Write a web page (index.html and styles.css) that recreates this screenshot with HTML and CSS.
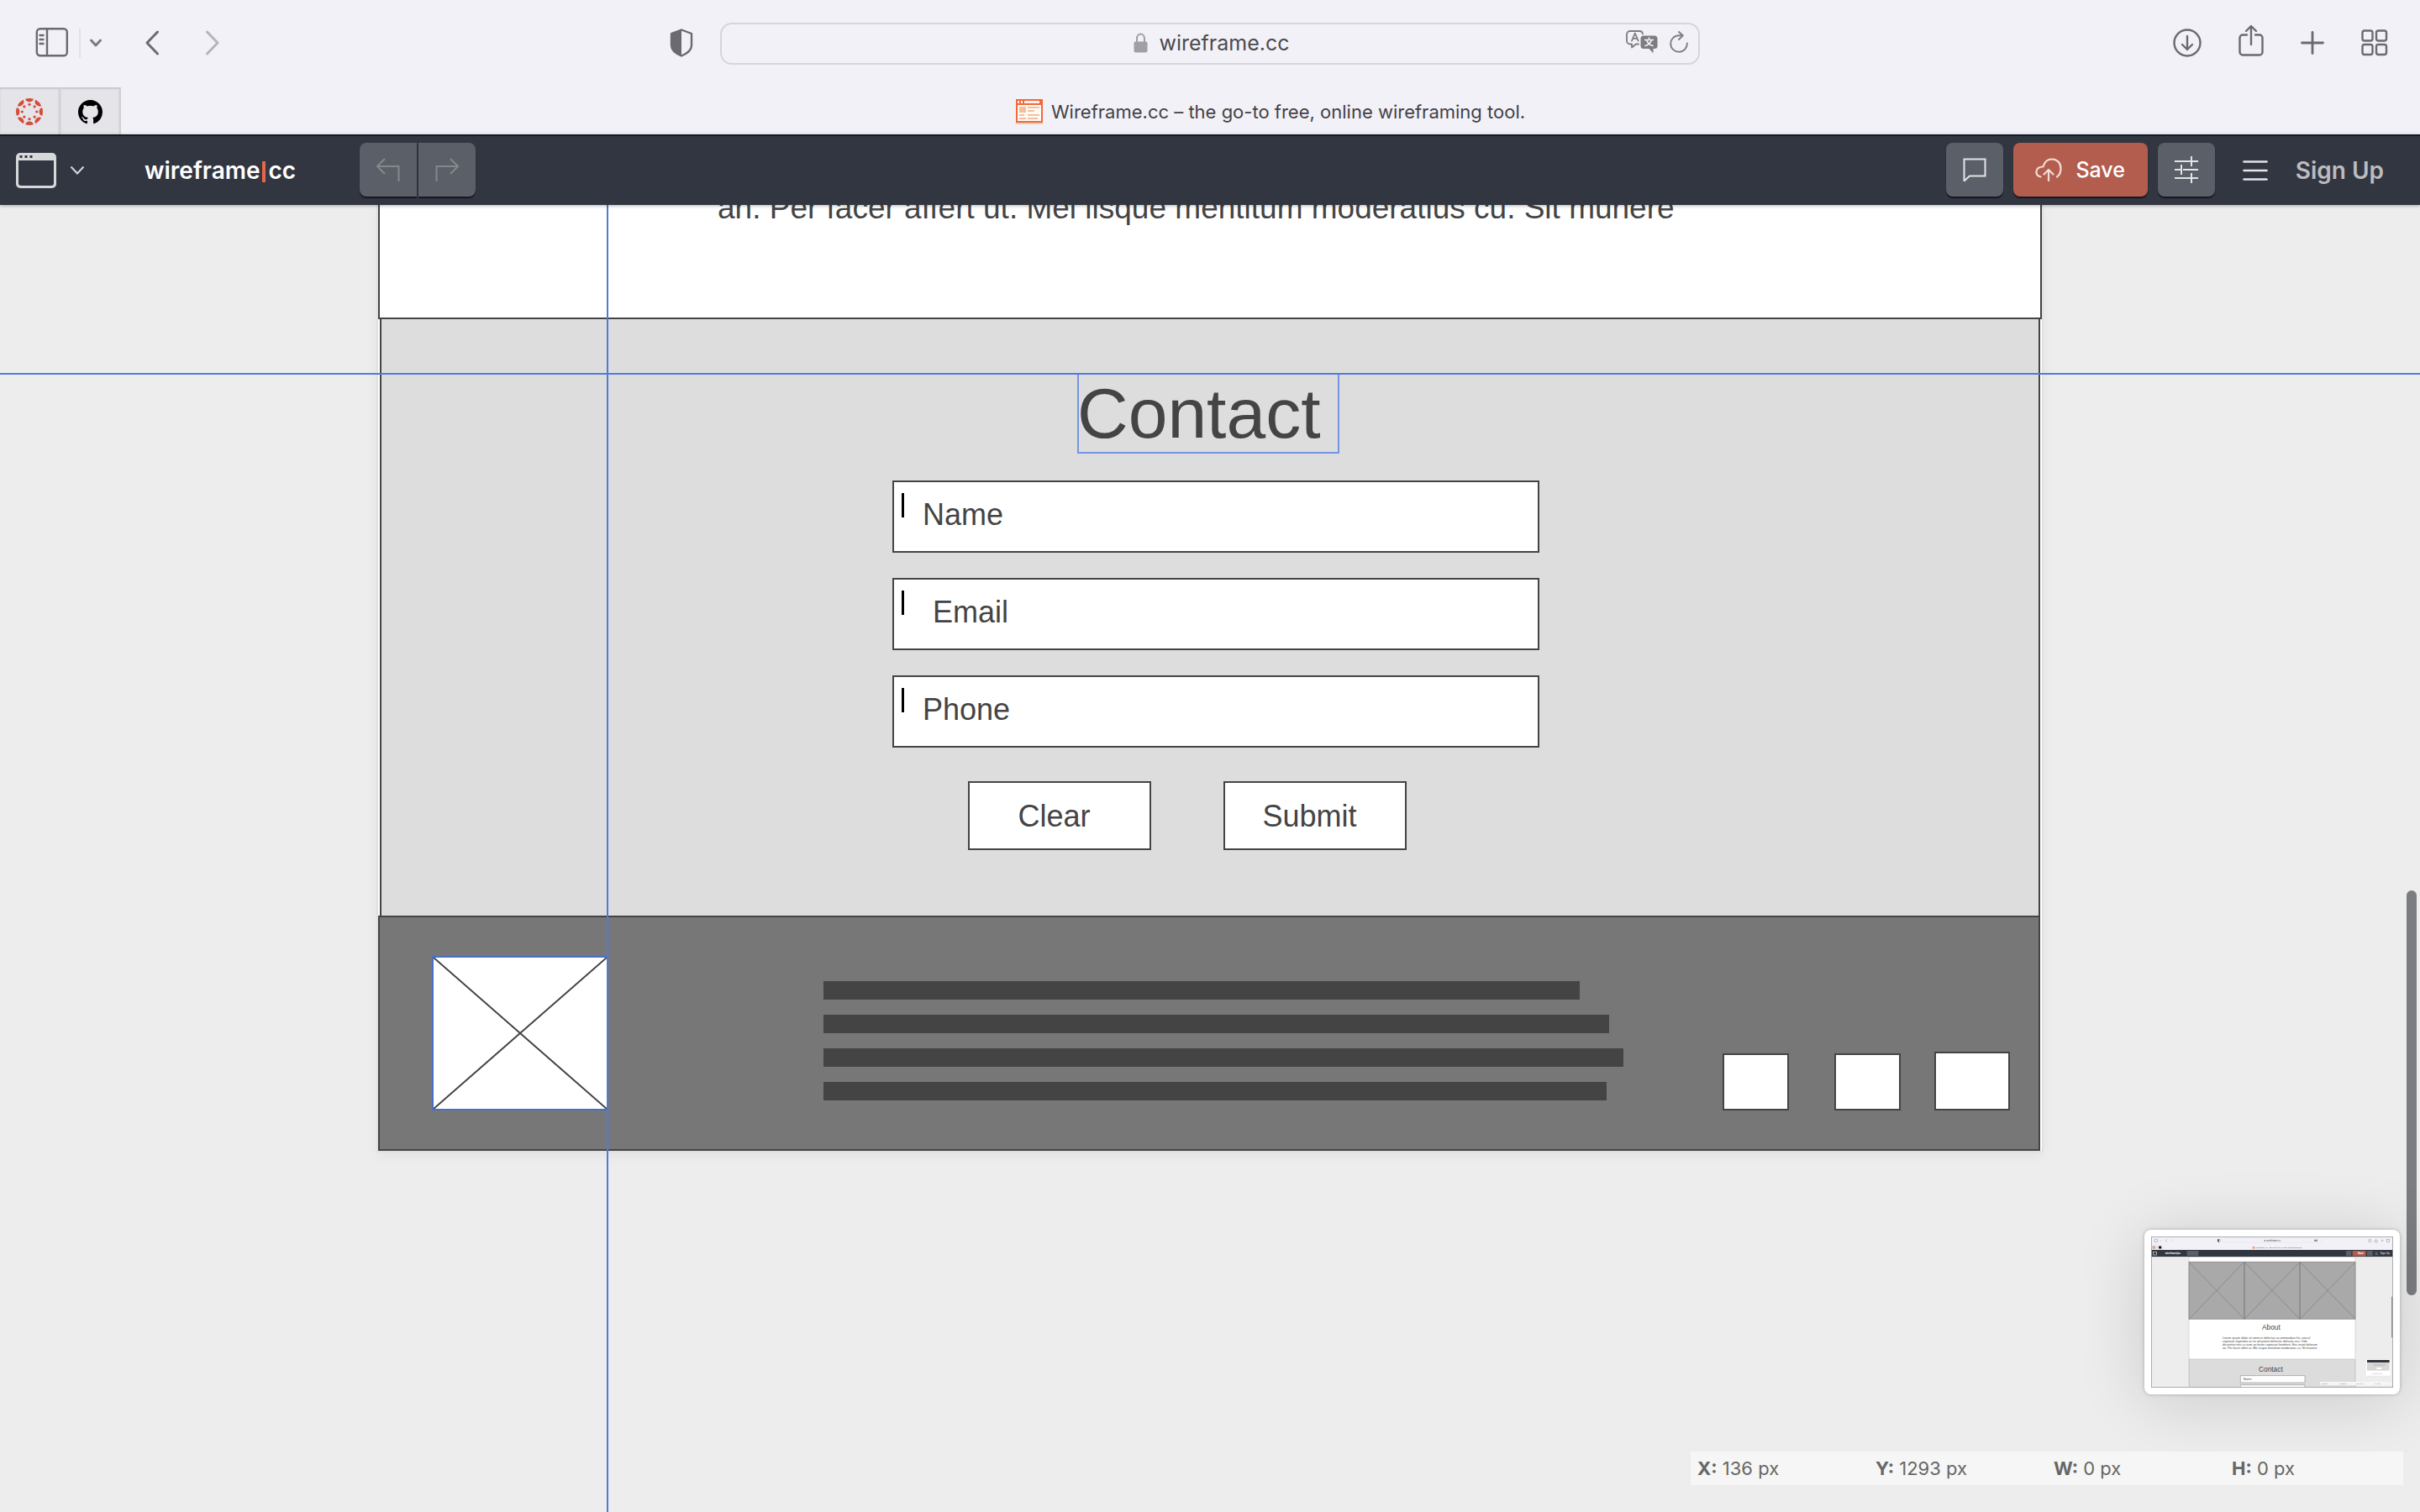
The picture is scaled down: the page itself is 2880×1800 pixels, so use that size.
FILE: index.html
```html
<!DOCTYPE html>
<html lang="en">
<head>
<meta charset="utf-8">
<title>Wireframe.cc – the go-to free, online wireframing tool.</title>
<link rel="stylesheet" href="styles.css">
</head>
<body>
<header class="browser">
  <div class="browser-bar">
    <div class="browser-left">
      <button class="icon-btn sidebar-btn" aria-label="Show sidebar">
        <svg width="40" height="36" viewBox="0 0 40 36" fill="none" stroke="#6b6a70" stroke-width="2.4" stroke-linecap="round"><rect x="1.8" y="1.2" width="36" height="32" rx="4"/><path d="M14 1v32M5.500 9h4M5.500 14h4M5.500 19h4" /></svg>
      </button>
      <span class="divider"></span>
      <button class="icon-btn menu-btn" aria-label="Sidebar menu">
        <svg width="16" height="12" viewBox="0 0 16 12" fill="none" stroke="#7c7b84" stroke-width="3" stroke-linecap="round" stroke-linejoin="round"><path d="M2.500 3l5.500 6 5.500-6"/></svg>
      </button>
      <button class="icon-btn back-btn" aria-label="Back">
        <svg width="18" height="32" viewBox="0 0 18 32" fill="none" stroke="#6b6a70" stroke-width="3" stroke-linecap="round" stroke-linejoin="round"><path d="M15.500 3L3 16l12.500 13"/></svg>
      </button>
      <button class="icon-btn forward-btn" aria-label="Forward">
        <svg width="18" height="32" viewBox="0 0 18 32" fill="none" stroke="#b5b4ba" stroke-width="3" stroke-linecap="round" stroke-linejoin="round"><path d="M2.500 3L15 16 2.500 29"/></svg>
      </button>
      <button class="icon-btn shield-btn" aria-label="Privacy report">
        <svg width="28" height="34" viewBox="0 0 28 34"><path d="M14 1.500L26 6v14c0 6-6 10-12 12.500C8 30 2 26 2 20V6z" fill="none" stroke="#6b6a70" stroke-width="2.400" stroke-linejoin="round"/><path d="M14 1.500V32.500C8 30 2 26 2 20V6z" fill="#6b6a70"/></svg>
      </button>
    </div>
    <div class="address">
      <span class="address-text">
        <svg width="17" height="24" viewBox="0 0 17 24"><path d="M4 12V7a4.500 5.500 0 0 1 9 0v5" fill="none" stroke="#a09fa5" stroke-width="2"/><rect x="0.500" y="10.500" width="16" height="13" rx="2" fill="#a09fa5"/></svg>
        <span>wireframe.cc</span>
      </span>
      <span class="address-tools">
        <button class="icon-btn" aria-label="Translate">
          <svg width="38" height="28" viewBox="0 0 38 28" fill="none" stroke="#7d7d80" stroke-width="1.800" stroke-linecap="round" stroke-linejoin="round"><path d="M15 16.500h-3l-5 4v-4H5a4 4 0 0 1-4-4V5a4 4 0 0 1 4-4h11a4 4 0 0 1 4 3.500"/><path d="M7 12.500l3.800-9 3.800 9M8.300 9.800h5"/><path d="M21 6.500h13a3.500 3.500 0 0 1 3.500 3.500v8.500a3.500 3.500 0 0 1-3.500 3.500h-1.500v5.500l-5-5.500H21a3.500 3.500 0 0 1-3.500-3.500V10a3.500 3.500 0 0 1 3.500-3.500z" fill="#7d7d80" stroke="none"/><path d="M22.500 11.500h10M27.500 9v2.500M30.500 11.500c-1 3.500-4 6-7.500 7M24.500 11.500c1 3.500 4 6 7.500 7" stroke="#f2f1f7" stroke-width="1.600"/></svg>
        </button>
        <button class="icon-btn" aria-label="Reload">
          <svg width="22" height="26" viewBox="0 0 22 26" fill="none" stroke="#828185" stroke-width="2" stroke-linecap="round" stroke-linejoin="round"><path d="M20.800 14.500a9.800 9.800 0 1 1-9.800-9.300h4.500M11 1l4.800 4.300L11 10"/></svg>
        </button>
      </span>
    </div>
    <div class="browser-right">
      <button class="icon-btn" aria-label="Downloads">
        <svg width="34" height="34" viewBox="0 0 34 34" fill="none" stroke="#6b6a70" stroke-width="2.400" stroke-linecap="round" stroke-linejoin="round"><circle cx="17" cy="17" r="15.500"/><path d="M17 9v16M11 19l6 6 6-6"/></svg>
      </button>
      <button class="icon-btn share-btn" aria-label="Share">
        <svg width="30" height="38" viewBox="0 0 30 38" fill="none" stroke="#6b6a70" stroke-width="2.400" stroke-linecap="round" stroke-linejoin="round"><path d="M10 12.500H5a3.500 3.500 0 0 0-3.500 3.500v17A3.500 3.500 0 0 0 5 36.500h20a3.500 3.500 0 0 0 3.500-3.500V16a3.500 3.500 0 0 0-3.500-3.500h-5M15 24V2.500M9 8l6-6 6 6"/></svg>
      </button>
      <button class="icon-btn new-tab-btn" aria-label="New tab">
        <svg width="28" height="28" viewBox="0 0 28 28" fill="none" stroke="#6b6a70" stroke-width="2.800" stroke-linecap="round"><path d="M14 1.500v25M1.500 14h25"/></svg>
      </button>
      <button class="icon-btn" aria-label="Tab overview">
        <svg width="32" height="32" viewBox="0 0 32 32" fill="none" stroke="#6b6a70" stroke-width="2.400"><rect x="1.500" y="1.500" width="12" height="12" rx="2.500"/><rect x="18" y="1.500" width="12" height="12" rx="2.500"/><rect x="1.500" y="18" width="12" height="12" rx="2.500"/><rect x="18" y="18" width="12" height="12" rx="2.500"/></svg>
      </button>
    </div>
  </div>
  <div class="tabs">
    <button class="pinned-tab" aria-label="Canvas">
      <svg width="32" height="32" viewBox="-16 -16 32 32" fill="#d64b38"><defs><g id="petal"><path d="M-4.800-15.200A16 16 0 0 1 4.800-15.200A4.800 3.600 0 0 1-4.800-15.200z"/><circle cx="0" cy="-8.700" r="1.600"/></g></defs><use href="#petal"/><use href="#petal" transform="rotate(45)"/><use href="#petal" transform="rotate(90)"/><use href="#petal" transform="rotate(135)"/><use href="#petal" transform="rotate(180)"/><use href="#petal" transform="rotate(225)"/><use href="#petal" transform="rotate(270)"/><use href="#petal" transform="rotate(315)"/></svg>
    </button>
    <button class="pinned-tab" aria-label="GitHub">
      <svg width="29" height="29" viewBox="0 0 16 16" fill="#000"><path d="M8 0C3.580 0 0 3.580 0 8c0 3.540 2.290 6.530 5.470 7.590.4.070.55-.17.55-.38 0-.19-.01-.82-.01-1.490-2.010.37-2.530-.49-2.690-.94-.09-.23-.48-.94-.82-1.130-.28-.15-.68-.52-.01-.53.63-.01 1.080.58 1.230.82.72 1.210 1.870.87 2.330.66.07-.52.28-.87.51-1.070-1.780-.2-3.640-.89-3.640-3.950 0-.87.31-1.590.82-2.150-.08-.2-.36-1.020.08-2.120 0 0 .67-.21 2.200.82.64-.18 1.320-.27 2-.27s1.360.09 2 .27c1.530-1.040 2.200-.82 2.200-.82.44 1.100.16 1.920.08 2.120.51.56.82 1.270.82 2.150 0 3.070-1.870 3.750-3.650 3.950.29.25.54.73.54 1.480 0 1.070-.01 1.930-.01 2.200 0 .21.15.46.55.38A8.010 8.010 0 0 0 16 8c0-4.420-3.580-8-8-8z"/></svg>
    </button>
    <div class="active-tab">
      <svg width="32" height="30" viewBox="0 0 32 30"><rect y="1" width="32" height="29" fill="#e9c9bd"/><rect width="32" height="28" fill="#f06a3b"/><path d="M2 7h28v19H2z" fill="#fffaf6"/><path d="M2 2h2v3H2zM6 2h2v3H6zM10 2h18v3H10z" fill="#fff1ea"/><path d="M4 9h8v7H4zM14 9h14v2H14zM14 13h8v2h-8zM4 18h6v2H4zM14 18h14v2H14zM4 22h8v2H4zM14 22h12v2H14z" fill="#f6bf9c"/></svg>
      <span>Wireframe.cc – the go-to free, online wireframing tool.</span>
    </div>
  </div>
</header>

<nav class="toolbar">
  <button class="icon-btn window-btn" aria-label="Page type">
    <svg width="48" height="42" viewBox="0 0 48 42"><path fill-rule="evenodd" d="M5 0h38a5 5 0 0 1 5 5v32a5 5 0 0 1-5 5H5a5 5 0 0 1-5-5V5a5 5 0 0 1 5-5zM3 9v27a3 3 0 0 0 3 3h36a3 3 0 0 0 3-3V9z" fill="#d6d8da"/><path d="M4.500 3h3v3h-3zM10.500 3h3v3h-3zM16.500 3h3v3h-3z" fill="#323641"/></svg>
    <svg width="18" height="12" viewBox="0 0 18 12" fill="none" stroke="#d6d8da" stroke-width="2"><path d="M1.500 1.500L9 9.500l7.500-8"/></svg>
  </button>
  <a class="brand" href="#">wireframe<span class="brand-bar"></span>cc</a>
  <div class="history">
    <button class="tool-btn" aria-label="Undo">
      <svg width="30" height="28" viewBox="0 0 30 28" fill="none" stroke="#86878a" stroke-width="2"><path d="M27.500 28V10H2M11 1L2 10l9 9"/></svg>
    </button>
    <button class="tool-btn" aria-label="Redo">
      <svg width="30" height="28" viewBox="0 0 30 28" fill="none" stroke="#86878a" stroke-width="2"><path d="M2.500 28V10H28M19 1l9 9-9 9"/></svg>
    </button>
  </div>
  <div class="actions">
    <button class="tool-btn" aria-label="Comments">
      <svg width="28" height="28" viewBox="0 0 28 28" fill="none" stroke="#e3e4e6" stroke-width="2"><path d="M1.500 1.500h25v20H8l-6.500 6z"/></svg>
    </button>
    <button class="tool-btn save-btn">
      <svg width="32" height="28" viewBox="0 0 32 28" fill="none" stroke="#f6dcd6" stroke-width="2.200" stroke-linecap="round" stroke-linejoin="round"><path d="M6.500 22.500C3 21.500 1 19 1.500 16c.5-3.500 3.500-5.500 8-5.500C11 5 14.500 1.500 20 1.500c6 0 10.500 4.500 10.500 11 0 4.500-1.500 8-4.500 10M16 27V14M10.500 19.500L16 14l5.500 5.500"/></svg>
      <span>Save</span>
    </button>
    <button class="tool-btn" aria-label="Settings">
      <svg width="28" height="32" viewBox="0 0 28 32" fill="none" stroke="#e3e4e6" stroke-width="2"><path d="M0 6h19M21 6h7M20 0v12M0 16h8M10 16h18M8 10v12M0 26h19M21 26h7M20 20v12"/></svg>
    </button>
    <button class="icon-btn burger-btn" aria-label="Menu">
      <svg width="30" height="26" viewBox="0 0 30 26" stroke="#e3e4e6" stroke-width="2.600" stroke-linecap="round"><path d="M1.500 2.500h27M1.500 13h27M1.500 23.500h27"/></svg>
    </button>
    <a class="sign-up" href="#">Sign Up</a>
  </div>
</nav>

<main class="canvas">
  <article class="artboard">
    <section class="about">
      <p class="about-text">an. Per facer affert ut. Mei iisque mentitum moderatius cu. Sit munere</p>
    </section>
    <section class="contact">
      <h2 class="contact-title">Contact</h2>
      <form class="contact-form">
        <label class="field"><span class="caret"></span><span class="field-name">Name</span><input type="text" name="name"></label>
        <label class="field field-indented"><span class="caret"></span><span class="field-name">Email</span><input type="email" name="email"></label>
        <label class="field"><span class="caret"></span><span class="field-name">Phone</span><input type="tel" name="phone"></label>
        <div class="form-buttons">
          <button class="form-btn" type="reset">Clear</button>
          <button class="form-btn" type="button">Submit</button>
        </div>
      </form>
    </section>
    <footer class="page-footer">
      <svg class="picture" viewBox="0 0 206 180" preserveAspectRatio="none"><path d="M0 0L206 180M206 0L0 180" stroke="#444" stroke-width="2"/></svg>
      <div class="copy-lines">
        <span class="copy-line" style="width:900px"></span>
        <span class="copy-line" style="width:935px"></span>
        <span class="copy-line" style="width:952px"></span>
        <span class="copy-line" style="width:932px"></span>
      </div>
      <div class="socials">
        <span class="social"></span>
        <span class="social"></span>
        <span class="social social-wide"></span>
      </div>
    </footer>
  </article>

  <span class="guide guide-x"></span>
  <span class="guide guide-y"></span>
  <span class="scroll-thumb"></span>

  <figure class="preview">
    <svg viewBox="0 0 864 540" font-family="Liberation Sans, sans-serif">
      <rect width="864" height="540" fill="#f2f1f7"/>
      <g fill="none" stroke="#8a8990" stroke-width="1.500"><rect x="12" y="10" width="11" height="10" rx="2"/><path d="M32 14l2 2 2-2M56 10l-4 5 4 5"/><path d="M74 10l4 5-4 5" stroke="#c4c3c8"/><circle cx="781" cy="15" r="5"/><path d="M799 13v7h8v-7M803 16V8M822 15h7M825 11v7"/><rect x="842" y="10" width="9" height="9"/></g>
      <path d="M242 10h-5v7l5 4z" fill="#333"/><path d="M242 10h5v7l-5 4" fill="none" stroke="#555"/>
      <rect x="256" y="7" width="352" height="15" rx="4" fill="none" stroke="#dedde2"/>
      <text x="412" y="18" font-size="9" fill="#444">wireframe.cc</text><path d="M404 12h4v6h-4zM582 11h12v6h-12z" fill="#888"/>
      <rect y="32" width="43" height="16" fill="#e5e4e9"/><circle cx="10" cy="39" r="4" fill="none" stroke="#d64b38" stroke-width="2"/><circle cx="32" cy="39" r="5" fill="#111"/>
      <rect x="362" y="36" width="9" height="8" fill="#f6a17e"/><text x="374" y="42" font-size="7" fill="#444">Wireframe.cc – the go-to free, online wireframing tool.</text>
      <rect y="48" width="864" height="25" fill="#323641"/>
      <rect x="7" y="55" width="13" height="11" fill="none" stroke="#ddd" stroke-width="2"/>
      <text x="50" y="64" font-size="9" font-weight="700" fill="#fff">wireframe|cc</text>
      <path d="M128 51h41v18h-41zM696 51h19v18h-19zM771 51h20v18h-20z" fill="#5b5f68"/><rect x="719" y="51" width="48" height="19" fill="#b35d4f"/>
      <text x="738" y="64" font-size="9" font-weight="700" fill="#fff">Save</text><text x="818" y="64" font-size="9" font-weight="700" fill="#c4c4c4">Sign Up</text><path d="M800 57h9M800 61h9M800 65h9" stroke="#ddd"/>
      <rect y="73" width="864" height="467" fill="#ededed"/>
      <rect x="135" y="73" width="594" height="467" fill="#fff" stroke="#999"/>
      <path d="M135 91h594v204H135z" fill="#a9a9a9"/>
      <path d="M135 91h198v204H135zM333 91h198v204H333zM531 91h198v204H531zM135 91l198 204M333 91L135 295M333 91l198 204M531 91L333 295M531 91l198 204M729 91L531 295" fill="none" stroke="#7c7c7c" stroke-width="2"/>
      <text x="396" y="333" font-size="25" fill="#444">About</text>
      <g font-size="11" fill="#444"><text x="255" y="365">Lorem ipsum dolor sit amet et delectus accommodare his consul</text><text x="255" y="378">copiosae legendos at vis ad putent delectus delicata usu. Vidit</text><text x="255" y="390">dissentiet eos cu eum an brute copiosae hendrerit. Eos erant dolorum</text><text x="255" y="403">an. Per facer affert ut. Mei iisque mentitum moderatius cu. Sit munere</text></g>
      <rect x="136" y="438" width="592" height="102" fill="#dcdcdc" stroke="#999"/>
      <text x="384" y="482" font-size="25" fill="#444">Contact</text>
      <path d="M319 497h230v25H319zM319 530h230v12H319z" fill="#fff" stroke="#777" stroke-width="1.500"/><text x="329" y="512" font-size="11" fill="#444">Name</text>
      <rect x="766" y="438" width="90" height="60" rx="3" fill="#fff" stroke="#ddd"/><rect x="771" y="441" width="80" height="9" fill="#33363e"/><rect x="771" y="450" width="80" height="29" fill="#d8d8d8"/><rect x="805" y="468" width="18" height="6" rx="2" fill="#fff"/><path d="M792 457h45M796 461h38M787 490h40" stroke="#999"/>
      <rect x="603" y="519" width="255" height="12" fill="#f6f6f6"/><g font-size="7" fill="#666"><text x="605" y="527">X: 33 px</text><text x="669" y="527">Y: 850 px</text><text x="733" y="527">W: 0 px</text><text x="797" y="527">H: 0 px</text></g>
      <rect x="858" y="215" width="4" height="146" fill="#888b90"/>
      <rect x="1" y="1" width="862" height="538" fill="none" stroke="#a0a0a4" stroke-width="3"/>
    </svg>
  </figure>

  <div class="status">
    <span><b>X:</b> 136 px</span>
    <span><b>Y:</b> 1293 px</span>
    <span><b>W:</b> 0 px</span>
    <span><b>H:</b> 0 px</span>
  </div>
</main>
</body>
</html>
```
FILE: styles.css
```css
* { box-sizing: border-box; }

body {
  margin: 0;
  min-height: 100vh;
  display: flex;
  flex-direction: column;
  background: #ededed;
  font-family: Inter, "Liberation Sans", sans-serif;
}

button { font: inherit; cursor: pointer; }
svg { display: block; }
a { text-decoration: none; }

.icon-btn {
  display: flex;
  align-items: center;
  padding: 0;
  border: 0;
  background: none;
}

/* Browser chrome */
.browser { background: #f2f1f7; }

.browser-bar {
  display: grid;
  grid-template-columns: 1fr minmax(0, 1166px) 1fr;
  align-items: center;
  height: 104px;
}

.browser-left,
.browser-right { display: flex; align-items: center; padding-bottom: 2px; }

.browser-left { padding-left: 42px; padding-right: 32px; }
.divider { width: 2px; height: 36px; margin: 0 10px 0 12px; background: #e2e1e7; }
.menu-btn { margin-right: 50px; }
.back-btn { margin-right: 54px; }
.shield-btn { margin-left: auto; }

.browser-right { justify-content: flex-end; padding-right: 38px; gap: 44px; }
.share-btn { margin-bottom: 6px; }

.address {
  display: grid;
  grid-template-columns: 1fr auto 1fr;
  align-items: center;
  height: 50px;
  border: 2px solid #d6d5da;
  border-radius: 14px;
}

.address-text {
  grid-column: 2;
  display: flex;
  align-items: center;
  gap: 13px;
  padding: 0 0 2px 4px;
  font-size: 25px;
  line-height: 32px;
  color: #4c4b50;
}

.address-tools { display: flex; justify-content: flex-end; gap: 14px; padding: 0 12px 4px 0; }

.tabs { display: flex; height: 56px; }

.pinned-tab {
  display: flex;
  align-items: center;
  justify-content: center;
  width: 72px;
  padding: 2px 0 0;
  border: 0;
  border-right: 2px solid #d1d0d5;
  background: #e5e4e9;
  box-shadow: inset 0 2px 2px #c6c5ca;
}

.active-tab {
  flex: 1;
  display: flex;
  align-items: center;
  justify-content: center;
  gap: 10px;
  padding-top: 2px;
  font-size: 22px;
  line-height: 28px;
  color: #424147;
}

/* Application toolbar */
.toolbar {
  position: relative;
  z-index: 1;
  display: flex;
  align-items: center;
  height: 84px;
  padding: 0 43px 0 19px;
  border-top: 2px solid #141a24;
  background: #323641;
  box-shadow: 0 1px 4px rgba(0, 0, 0, 0.3);
}

.window-btn { gap: 16px; }

.brand {
  display: flex;
  align-items: center;
  margin-left: 71px;
  font-size: 28px;
  line-height: 36px;
  font-weight: 600;
  color: #fff;
}

.brand-bar { width: 4px; height: 25px; margin: 2px 3px 0; background: #e8654a; }

.history { display: flex; gap: 2px; margin-left: 76px; }
.history .tool-btn:first-child { border-radius: 8px 0 0 8px; }
.history .tool-btn:last-child { border-radius: 0 8px 8px 0; }

.tool-btn {
  display: flex;
  align-items: center;
  justify-content: center;
  gap: 16px;
  width: 68px;
  height: 64px;
  padding: 0;
  border: 0;
  border-radius: 8px;
  background: #5b5f68;
  box-shadow: 0 2px 1px #16181d;
}

.history .tool-btn,
.actions .tool-btn { margin-bottom: 2px; }

.actions { display: flex; align-items: center; gap: 12px; margin-left: auto; }

.save-btn {
  width: 160px;
  background: #b35d4f;
  font-size: 25px;
  line-height: 32px;
  font-weight: 500;
  color: #fff;
}

.burger-btn { margin: 0 21px; }

.sign-up { font-size: 28px; line-height: 36px; font-weight: 600; color: #bcbcbe; }

/* Drawing canvas */
.canvas {
  position: relative;
  flex: 1;
  overflow: hidden;
  background: #ededed;
}

.artboard {
  max-width: 1980px;
  margin: 0 auto;
  background: #fff;
  box-shadow: 0 0 0 2px #e0e0e2, 0 4px 16px rgba(0, 0, 0, 0.06);
  color: #444;
  font-family: "Liberation Sans", sans-serif;
}

.about {
  display: flex;
  align-items: flex-end;
  height: 136px;
  padding: 0 0 109px 402px;
  overflow: hidden;
  border: solid #444;
  border-width: 0 2px 2px;
}

.about-text { margin: 0; font-size: 37px; line-height: 42px; white-space: nowrap; }

.contact {
  display: flex;
  flex-direction: column;
  align-items: center;
  margin: 0 2px;
  padding: 64px 0 78px;
  border: solid #444;
  border-width: 0 2px;
  background: #ddd;
}

.contact-title {
  width: 312px;
  margin: 0 4px 32px 0;
  outline: 2px solid #7495e4;
  outline-offset: -2px;
  font-size: 84px;
  line-height: 96px;
  font-weight: 400;
}

.contact-form {
  display: flex;
  flex-direction: column;
  gap: 30px;
  width: 770px;
  margin-left: 14px;
}

.field {
  display: flex;
  align-items: center;
  height: 86px;
  padding: 0 8px 4px 9px;
  border: 2px solid #444;
  background: #fff;
  font-size: 36px;
  line-height: 42px;
}

.caret { align-self: flex-start; width: 3px; height: 29px; margin: 13px 22px 0 0; background: #000; }
.field-indented .caret { margin-right: 34px; }

.field input {
  flex: 1;
  min-width: 0;
  height: 42px;
  padding: 0 12px;
  border: 0;
  outline: 0;
  background: none;
  font: inherit;
  color: inherit;
}

.form-buttons { display: flex; gap: 86px; padding: 10px 0 0 90px; }

.form-btn {
  width: 218px;
  height: 82px;
  padding: 2px 13px 0 0;
  border: 2px solid #444;
  background: #fff;
  font-size: 36px;
  line-height: 42px;
  color: #444;
}

.page-footer {
  display: flex;
  align-items: flex-end;
  height: 280px;
  margin-right: 2px;
  padding: 0 34px 46px 62px;
  border: 2px solid #444;
  background: #777;
}

.picture { width: 210px; height: 184px; border: 2px solid #4a70c2; background: #fff; }

.copy-lines { display: flex; flex-direction: column; gap: 18px; margin-left: 256px; padding-bottom: 12px; }
.copy-line { height: 22px; background: #444; }

.socials { display: flex; align-items: flex-end; gap: 40px; margin-left: auto; }
.social { width: 79px; height: 68px; border: 2px solid #444; background: #fff; }
.social:first-child { margin-right: 14px; }
.social-wide { width: 90px; height: 70px; }

/* Layers over the canvas */
.guide { position: absolute; background: #4f79e0; }
.guide-x { top: 0; bottom: 0; left: calc(50% - 718px); width: 2px; }
.guide-y { top: 200px; left: 0; right: 0; height: 2px; }

.scroll-thumb {
  position: absolute;
  top: 816px;
  right: 4px;
  width: 12px;
  height: 482px;
  border-radius: 6px;
  background: #7b7d81;
}

.preview {
  position: absolute;
  right: 24px;
  bottom: 140px;
  width: 304px;
  margin: 0;
  padding: 8px;
  border-radius: 8px;
  background: #fff;
  box-shadow: 0 0 4px rgba(0, 0, 0, 0.25), 0 8px 80px rgba(0, 0, 0, 0.15);
}

.status {
  position: absolute;
  right: 20px;
  bottom: 32px;
  display: grid;
  grid-template-columns: repeat(4, 212px);
  height: 40px;
  align-items: center;
  background: rgba(255, 255, 255, 0.5);
  color: #666;
  font-size: 22px;
  line-height: 28px;
}

.status span { padding-left: 8px; }
```
